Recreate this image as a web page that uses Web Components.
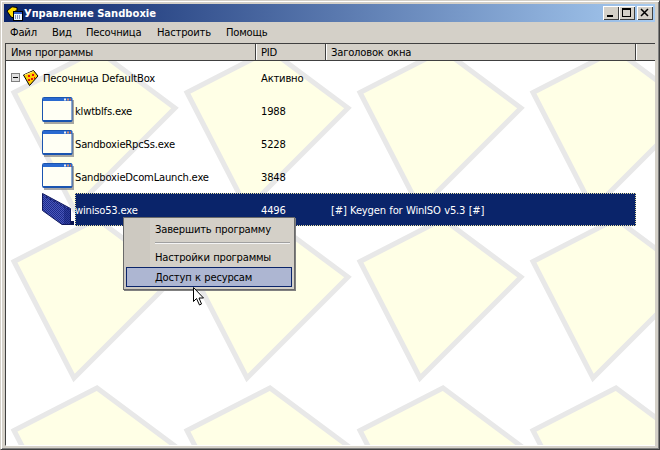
<!DOCTYPE html>
<html lang="ru">
<head>
<meta charset="utf-8">
<title>Управление Sandboxie</title>
<style>
  html, body { margin: 0; height: 100%; background: #d4d0c8; overflow: hidden; }
  body { font: 10px "DejaVu Sans", Arial, sans-serif; color: #000; letter-spacing: -.2px; word-spacing: .5px; }
</style>
</head>
<body>

<sbx-window>
  <sbx-titlebar slot="title">Управление Sandboxie</sbx-titlebar>
  <sbx-menubar slot="menu">
    <span style="width:42px">Файл</span>
    <span style="width:34px">Вид</span>
    <span style="width:71px">Песочница</span>
    <span style="width:69px">Настроить</span>
    <span>Помощь</span>
  </sbx-menubar>
  <sbx-header slot="header"></sbx-header>
  <sbx-list slot="list">
    <sbx-row kind="box" name="Песочница DefaultBox" pid="Активно"></sbx-row>
    <sbx-row kind="app" name="klwtblfs.exe" pid="1988"></sbx-row>
    <sbx-row kind="app" name="SandboxieRpcSs.exe" pid="5228"></sbx-row>
    <sbx-row kind="app" name="SandboxieDcomLaunch.exe" pid="3848"></sbx-row>
    <sbx-row kind="book" selected name="winiso53.exe" pid="4496" caption="[#] Keygen for WinISO v5.3 [#]"></sbx-row>
    <sbx-context-menu></sbx-context-menu>
  </sbx-list>
</sbx-window>

<script>
class SbxWindow extends HTMLElement {
  constructor() {
    super();
    this.attachShadow({ mode: 'open' });
    this.shadowRoot.innerHTML = `
      <style>
        :host {
          display: flex;
          flex-direction: column;
          box-sizing: border-box;
          width: 660px;
          height: 450px;
          padding: 4px 4px 3px 4px;
          background: #d4d0c8;
          border: 1px solid;
          border-color: #d4d0c8 #404040 #404040 #d4d0c8;
          box-shadow: inset 1px 1px 0 #fff, inset -1px -1px 0 #808080;
        }
        .view { flex: 1; display: flex; flex-direction: column; min-height: 0; }
      </style>
      <slot name="title"></slot>
      <slot name="menu"></slot>
      <div class="view">
        <slot name="header"></slot>
        <slot name="list"></slot>
      </div>
    `;
  }
}

class SbxTitlebar extends HTMLElement {
  constructor() {
    super();
    this.attachShadow({ mode: 'open' });
    this.shadowRoot.innerHTML = `
      <style>
        :host {
          display: flex;
          align-items: center;
          height: 18px;
          margin: -1px 0 0 -1px;
          padding: 0 2px;
          background: linear-gradient(90deg, #0a246a, #a6caf0);
          color: #fff;
          font: bold 10px "DejaVu Sans", Arial, sans-serif;
          letter-spacing: 0;
          word-spacing: 0;
          flex-shrink: 0;
        }
        .icon { width: 18px; height: 15px; margin-right: 0; flex-shrink: 0; }
        .text { flex: 1; }
        .btn {
          width: 16px;
          height: 14px;
          box-sizing: border-box;
          background: #d4d0c8;
          box-shadow: inset 1px 1px 0 #fff, inset -1px -1px 0 #404040;
          display: flex;
        }
        .btn.close { margin-left: 2px; }
        .btn svg { width: 16px; height: 14px; }
      </style>
      <svg class="icon" viewBox="0 0 18 15">
        <path d="M1 5 L6 .8 L11 1.5 L11 5 L9 5 L8 12 L5 11 Z" fill="#ffdc00" stroke="#000"/>
        <rect x="7.5" y="5.5" width="9" height="9" fill="#e8f4ff" stroke="#000"/>
        <rect x="8" y="6" width="8" height="2" fill="#3060d0"/>
        <path d="M9 10h1M11 10h1M13 10h1M9 12h1M11 12h1M13 12h1" stroke="#203080" stroke-width="1"/>
      </svg>
      <span class="text"><slot></slot></span>
      <span class="btn"><svg viewBox="0 0 16 14"><rect x="4" y="9" width="6" height="2"/></svg></span>
      <span class="btn"><svg viewBox="0 0 16 14"><path d="M3 3.5h9M3.5 3v8M3 10.5h9M11.5 3v8M3 2.5h9" fill="none" stroke="#000"/></svg></span>
      <span class="btn close"><svg viewBox="0 0 16 14"><path d="M4 3 L11 10 M11 3 L4 10" stroke="#000" stroke-width="1.5"/></svg></span>
    `;
  }
}

class SbxMenubar extends HTMLElement {
  constructor() {
    super();
    this.attachShadow({ mode: 'open' });
    this.shadowRoot.innerHTML = `
      <style>
        :host {
          display: flex;
          align-items: center;
          height: 21px;
          padding: 0 0 1px 5px;
          box-sizing: border-box;
          flex-shrink: 0;
        }
        ::slotted(span) { display: block; }
      </style>
      <slot></slot>
    `;
  }
}

class SbxHeader extends HTMLElement {
  constructor() {
    super();
    this.attachShadow({ mode: 'open' });
    this.shadowRoot.innerHTML = `
      <style>
        :host {
          display: flex;
          height: 18px;
          flex-shrink: 0;
          box-sizing: border-box;
          border-top: 1px solid #404040;
          border-bottom: 1px solid #404040;
          border-left: 1px solid #404040;
        }
        div {
          box-sizing: border-box;
          padding: 3px 0 0 5px;
          box-shadow: inset -1px 0 0 #404040;
        }
        .name { width: 250px; }
        .pid { width: 70px; }
        .cap { width: 310px; }
        .rest { flex: 1; box-shadow: inset 1px 0 0 #fff; }
        .pid { box-shadow: inset 1px 0 0 #fff, inset -1px 0 0 #404040; }
        .cap { box-shadow: inset 1px 0 0 #fff, inset -1px 0 0 #404040; }
      </style>
      <div class="name">Имя программы</div>
      <div class="pid">PID</div>
      <div class="cap">Заголовок окна</div>
      <div class="rest"></div>
    `;
  }
}

const TILE = `<svg xmlns='http://www.w3.org/2000/svg' width='173' height='169'><path d='M5 47.5 L88 5 L166 63 L65 164 Z' fill='%23ffffe6' stroke='%23e8e8e8' stroke-width='5' stroke-linejoin='miter'/></svg>`;

class SbxList extends HTMLElement {
  constructor() {
    super();
    this.attachShadow({ mode: 'open' });
    this.shadowRoot.innerHTML = `
      <style>
        :host {
          display: block;
          position: relative;
          flex: 1;
          min-height: 0;
          overflow: hidden;
          box-sizing: border-box;
          background: #fff url("data:image/svg+xml,${TILE}") 3px -16px / 173px 169px;
          border-left: 1px solid #404040;
          border-bottom: 1px solid #fff;
        }
      </style>
      <slot></slot>
    `;
  }
}

const ICONS = {
  box: `<svg width="16" height="16" viewBox="0 0 16 16">
      <path d="M.5 5 L10.5 .5 L15 6 L6.5 15.5 Z" fill="#ffcc00" stroke="#000"/>
      <path d="M1.5 5 L10.5 1.5" stroke="#ffee88"/>
      <g fill="#e01010"><rect x="5" y="5" width="2" height="2"/><rect x="9" y="4" width="2" height="2"/><rect x="8" y="8" width="2" height="2"/><rect x="5" y="9" width="2" height="2"/><rect x="11" y="7" width="1" height="2"/></g>
    </svg>`,
  app: `<svg width="32" height="27" viewBox="0 0 32 27">
      <rect x="2" y="3" width="30" height="24" fill="#8a8a8a" opacity=".75"/>
      <rect x=".5" y=".5" width="29.5" height="24" rx="1" fill="#fffff4" stroke="#1a55b0"/>
      <rect x="1" y="1" width="29" height="3" fill="#2a6ad0"/>
      <rect x="1" y="23" width="29" height="1.5" fill="#1a55b0"/>
      <rect x="22" y="1.5" width="2" height="2" fill="#f0f0f0"/><rect x="25" y="1.5" width="2" height="2" fill="#d89070"/><rect x="28" y="1.5" width="1" height="2" fill="#d06040"/>
    </svg>`,
  book: `<svg width="33" height="33" viewBox="0 0 33 33">
      <defs><pattern id="d" width="2" height="2" patternUnits="userSpaceOnUse"><rect width="2" height="2" fill="#1c2a8c"/><rect width="1" height="1" fill="#4a58b8"/><rect x="1" y="1" width="1" height="1" fill="#4a58b8"/></pattern></defs>
      <path d="M28 28 H32 V32 H22 Z" fill="#0a1450"/>
      <path d="M.5 .5 L28.5 15.5 L28.5 31.5 L20 31.5 L.5 17.5 Z" fill="url(#d)" stroke="#10185c"/>
      <path d="M4 4 L28 17" stroke="#10185c" stroke-dasharray="2 2" fill="none"/>
      <path d="M22 14 L28 17 V31 H22 Z" fill="#101c70" opacity=".45"/>
    </svg>`
};

class SbxRow extends HTMLElement {
  constructor() {
    super();
    this.attachShadow({ mode: 'open' });
    this.shadowRoot.innerHTML = `
      <style>
        :host { display: flex; height: 33px; align-items: center; position: relative; }
        .tree { width: 69px; flex-shrink: 0; box-sizing: border-box; display: flex; align-items: center; }
        .tree.box { padding-left: 5px; width: 37px; }
        .tree.app { padding-left: 36px; }
        .expand {
          width: 9px; height: 9px; box-sizing: border-box; margin-right: 3px;
          border: 1px solid #808080; background: #e0e0e0; display: flex; align-items: center; justify-content: center;
        }
        .expand::before { content: ''; width: 5px; height: 1px; background: #000; }
        .fields { flex: 1; display: flex; align-items: center; height: 100%; margin-right: 19px; box-sizing: border-box; }
        .fields span { padding-top: 2px; }
        :host(:not([kind="box"])) .name { width: 186px; flex: none; }
        :host([kind="box"]) .name { width: 218px; flex: none; }
        .pid { width: 70px; flex: none; }
        .cap { flex: 1; }
        :host([selected]) .fields {
          background: #0a246a;
          color: #fff;
          outline: 1px dotted #e8e0a0;
          outline-offset: -1px;
        }
      </style>
      <div class="tree"></div>
      <div class="fields">
        <span class="name"></span><span class="pid"></span><span class="cap"></span>
      </div>
    `;
  }

  connectedCallback() {
    const root = this.shadowRoot;
    const kind = this.getAttribute('kind');
    const tree = root.querySelector('.tree');
    tree.classList.add(kind === 'box' ? 'box' : 'app');
    tree.innerHTML = (kind === 'box' ? '<span class="expand"></span>' : '') + ICONS[kind];
    root.querySelector('.name').textContent = this.getAttribute('name');
    root.querySelector('.pid').textContent = this.getAttribute('pid');
    root.querySelector('.cap').textContent = this.getAttribute('caption') || '';
  }
}

class SbxContextMenu extends HTMLElement {
  constructor() {
    super();
    this.attachShadow({ mode: 'open' });
    this.shadowRoot.innerHTML = `
      <style>
        :host {
          position: absolute;
          left: 117px;
          top: 156px;
          width: 172px;
          box-sizing: border-box;
          padding: 2px;
          background: linear-gradient(90deg, #cdc9c1 0 26px, #d4d0c8 26px);
          border: 1px solid #6a6a6a;
          box-shadow: 1px 1px 0 #808080;
        }
        .item { height: 18px; padding: 0 0 0 29px; display: flex; align-items: center; box-sizing: border-box; }
        .sep { height: 1px; margin: 5px 2px 4px 29px; background: #f4f4f4; box-shadow: 0 -1px 0 #a0a0a0; }
        .hot { height: 20px; margin-top: 1px; background: #adb6d2; border: 1px solid #0a246a; padding-left: 28px; }
        svg.cursor { position: absolute; left: 69px; top: 69px; }
      </style>
      <div class="item">Завершить программу</div>
      <div class="sep"></div>
      <div class="item">Настройки программы</div>
      <div class="item hot">Доступ к ресурсам</div>
      <svg class="cursor" width="12" height="19" viewBox="0 0 12 19">
        <path d="M.5 .5 V14.5 L3.5 11.5 L6.5 18 L8.5 17 L6 11 L10.5 11 Z" fill="#fff" stroke="#000"/>
      </svg>
    `;
  }
}

customElements.define('sbx-window', SbxWindow);
customElements.define('sbx-titlebar', SbxTitlebar);
customElements.define('sbx-menubar', SbxMenubar);
customElements.define('sbx-header', SbxHeader);
customElements.define('sbx-list', SbxList);
customElements.define('sbx-row', SbxRow);
customElements.define('sbx-context-menu', SbxContextMenu);
</script>
</body>
</html>
